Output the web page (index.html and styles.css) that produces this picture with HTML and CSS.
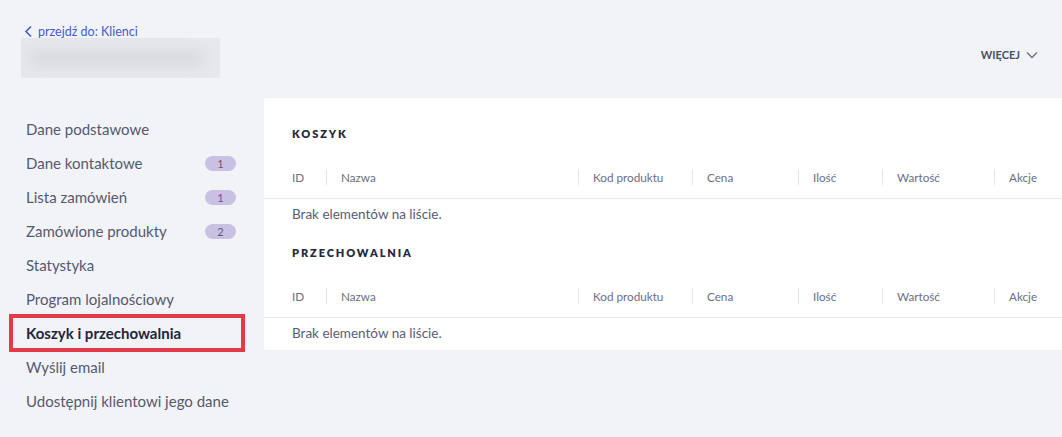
FILE: index.html
```html
<!DOCTYPE html>
<html lang="pl">
<head>
<meta charset="utf-8">
<title>Koszyk i przechowalnia</title>
<link rel="stylesheet" href="styles.css">
</head>
<body>
<header class="top">
  <div class="top-left">
    <a class="back" href="#">
      <svg class="back-icon" width="9" height="13" viewBox="0 0 9 13"><path d="M7 1.5 L2 6.5 L7 11.5" fill="none" stroke="currentColor" stroke-width="1.6"/></svg>
      <span>przejdź do: Klienci</span>
    </a>
    <div class="title-blur"><div class="blur-inner"></div></div>
  </div>
  <button class="more">WIĘCEJ
    <svg class="more-icon" width="12" height="8" viewBox="0 0 12 8"><path d="M1 1.5 L6 6.5 L11 1.5" fill="none" stroke="currentColor" stroke-width="1.3"/></svg>
  </button>
</header>
<div class="main">
  <nav class="nav">
    <a class="nav-item" href="#">Dane podstawowe</a>
    <a class="nav-item" href="#">Dane kontaktowe <span class="badge">1</span></a>
    <a class="nav-item" href="#">Lista zamówień <span class="badge">1</span></a>
    <a class="nav-item" href="#">Zamówione produkty <span class="badge">2</span></a>
    <a class="nav-item" href="#">Statystyka</a>
    <a class="nav-item" href="#">Program lojalnościowy</a>
    <a class="nav-item active" href="#">Koszyk i przechowalnia</a>
    <a class="nav-item" href="#">Wyślij email</a>
    <a class="nav-item" href="#">Udostępnij klientowi jego dane</a>
  </nav>
  <section class="panel">
    <div class="block">
      <h2 class="block-title">KOSZYK</h2>
      <div class="thead">
        <div class="th">ID</div>
        <div class="th sep">Nazwa</div>
        <div class="th sep">Kod produktu</div>
        <div class="th sep">Cena</div>
        <div class="th sep">Ilość</div>
        <div class="th sep">Wartość</div>
        <div class="th sep">Akcje</div>
      </div>
      <div class="empty">Brak elementów na liście.</div>
    </div>
    <div class="block">
      <h2 class="block-title">PRZECHOWALNIA</h2>
      <div class="thead">
        <div class="th">ID</div>
        <div class="th sep">Nazwa</div>
        <div class="th sep">Kod produktu</div>
        <div class="th sep">Cena</div>
        <div class="th sep">Ilość</div>
        <div class="th sep">Wartość</div>
        <div class="th sep">Akcje</div>
      </div>
      <div class="empty">Brak elementów na liście.</div>
    </div>
  </section>
</div>
</body>
</html>
```
FILE: styles.css
```css
* { box-sizing: border-box; }
html, body { margin: 0; padding: 0; }
body {
  background: #f2f3f7;
  font-family: Lato, "Noto Sans", sans-serif;
  color: #4f546c;
  width: 1062px;
  height: 437px;
  overflow: hidden;
}
.top {
  height: 98px;
  display: flex;
  justify-content: space-between;
  align-items: flex-start;
}
.top-left {
  padding: 25px 0 0 21px;
  display: flex;
  flex-direction: column;
}
.back {
  display: flex;
  align-items: center;
  gap: 5px;
  color: #3f5bd8;
  text-decoration: none;
  font-size: 12.5px;
  line-height: 13px;
  padding-left: 3px;
}
.back-icon { display: block; }
.title-blur {
  width: 199px;
  height: 40px;
  background: #e7e8ed;
  overflow: hidden;
}
.blur-inner {
  width: 175px;
  height: 16px;
  margin: 12px 0 0 8px;
  background: #d8d9df;
  border-radius: 8px;
  filter: blur(7px);
}
.more {
  margin: 48px 24px 0 0;
  border: 0;
  background: none;
  font-family: inherit;
  font-size: 11px;
  font-weight: 700;
  letter-spacing: 0;
  color: #4a4f69;
  display: flex;
  align-items: center;
  gap: 6px;
  padding: 0;
}
.more-icon { display: block; color: #6b6f85; }
.main {
  display: flex;
  align-items: flex-start;
}
.nav {
  width: 264px;
  flex: none;
  padding: 14px 28px 0 26px;
  display: flex;
  flex-direction: column;
}
.nav-item {
  height: 34px;
  display: flex;
  align-items: center;
  justify-content: space-between;
  font-size: 15px;
  white-space: nowrap;
  color: #55596f;
  text-decoration: none;
  position: relative;
}
.nav-item.active {
  font-weight: 700;
  color: #22253a;
}
.nav-item.active::after {
  content: "";
  position: absolute;
  top: -2px;
  bottom: -2px;
  left: -17px;
  right: -9px;
  border: 4px solid #e33b45;
}
.badge {
  width: 31px;
  height: 15px;
  border-radius: 8px;
  background: #c9c1e3;
  color: #5d5878;
  font-size: 11px;
  line-height: 15px;
  text-align: center;
}
.panel {
  flex: 1;
  background: #fff;
  padding: 13px 0 1px 0;
}
.block-title {
  margin: 0;
  height: 46px;
  line-height: 46px;
  padding-left: 28px;
  font-size: 11px;
  font-weight: 800;
  letter-spacing: 1.9px;
  color: #262a3c;
}
.thead {
  display: grid;
  grid-template-columns: 62px 252px 114px 106px 84px 112px 1fr;
  height: 42px;
  padding-bottom: 2px;
  border-bottom: 1px solid #e6e7eb;
  align-items: center;
}
.th {
  font-size: 11.7px;
  color: #6b6e84;
  position: relative;
  padding-left: 15px;
  height: 16px;
  line-height: 16px;
}
.th:first-child { padding-left: 28px; }
.th.sep::before {
  content: "";
  position: absolute;
  left: 0;
  top: 0;
  width: 1px;
  height: 16px;
  background: #e4e5e9;
}
.empty {
  height: 31px;
  line-height: 31px;
  padding-left: 28px;
  font-size: 13.5px;
  color: #585c73;
}
```
